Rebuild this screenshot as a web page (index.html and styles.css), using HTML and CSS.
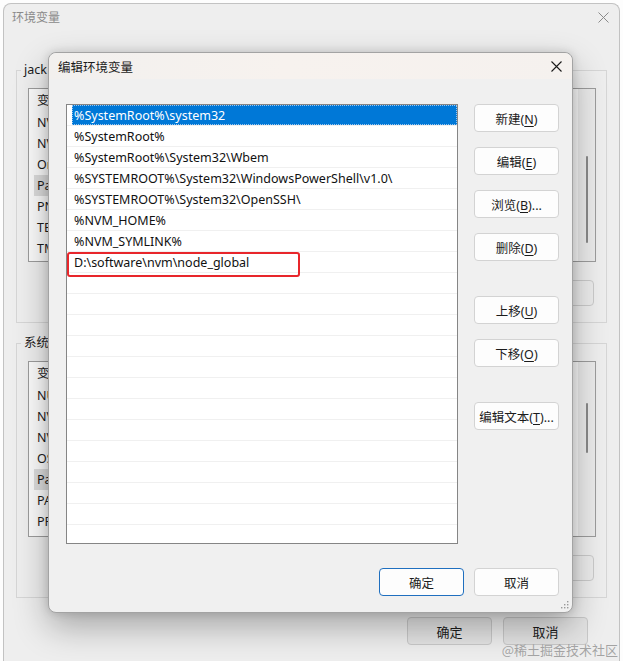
FILE: index.html
```html
<!DOCTYPE html>
<html lang="zh-CN">
<head>
<meta charset="utf-8">
<title>编辑环境变量</title>
<link rel="stylesheet" href="styles.css">
</head>
<body>
<div class="envwin">
  <div class="wtitle">
    <span>环境变量</span>
    <svg class="wclose" viewBox="0 0 11 11"><path d="M0.5 0.5L10.5 10.5M10.5 0.5L0.5 10.5" stroke="#8a8a8a" stroke-width="1" fill="none"/></svg>
  </div>
  <div class="wbody">
    <fieldset class="group">
      <legend>jack</legend>
      <div class="blist blist1">
        <div class="bcol">
          <div class="bhead">变</div>
          <div class="brow">NV</div>
          <div class="brow">NV</div>
          <div class="brow">On</div>
          <div class="brow sel">Pa</div>
          <div class="brow">PN</div>
          <div class="brow">TE</div>
          <div class="brow">TM</div>
        </div>
        <div class="bscroll"><div class="bthumb thumb1"></div></div>
      </div>
      <div class="bbtns">
        <button class="bbtn"></button>
        <button class="bbtn"></button>
        <button class="bbtn"></button>
      </div>
    </fieldset>
    <fieldset class="group group2">
      <legend>系统</legend>
      <div class="blist blist2">
        <div class="bcol">
          <div class="bhead">变</div>
          <div class="brow">NU</div>
          <div class="brow">NV</div>
          <div class="brow">NV</div>
          <div class="brow">OS</div>
          <div class="brow sel">Pa</div>
          <div class="brow">PA</div>
          <div class="brow">PR</div>
        </div>
        <div class="bscroll"><div class="bthumb thumb2"></div></div>
      </div>
      <div class="bbtns">
        <button class="bbtn"></button>
        <button class="bbtn"></button>
        <button class="bbtn"></button>
      </div>
    </fieldset>
    <div class="wfoot">
      <button class="wbtn">确定</button>
      <button class="wbtn">取消</button>
    </div>
  </div>
</div>

<div class="dialog">
  <div class="dtitle">
    <span>编辑环境变量</span>
    <svg class="dclose" viewBox="0 0 11 11"><path d="M0.5 0.5L10.5 10.5M10.5 0.5L0.5 10.5" stroke="#1a1a1a" stroke-width="1.1" fill="none"/></svg>
  </div>
  <div class="dbody">
    <div class="plist">
      <div class="prow sel"><span class="pcell">%SystemRoot%\system32</span></div>
      <div class="prow"><span class="pcell">%SystemRoot%</span></div>
      <div class="prow"><span class="pcell">%SystemRoot%\System32\Wbem</span></div>
      <div class="prow"><span class="pcell">%SYSTEMROOT%\System32\WindowsPowerShell\v1.0\</span></div>
      <div class="prow"><span class="pcell">%SYSTEMROOT%\System32\OpenSSH\</span></div>
      <div class="prow"><span class="pcell">%NVM_HOME%</span></div>
      <div class="prow"><span class="pcell">%NVM_SYMLINK%</span></div>
      <div class="prow"><span class="pcell">D:\software\nvm\node_global</span></div>
      <div class="prow"><span class="pcell"></span></div>
      <div class="prow"><span class="pcell"></span></div>
      <div class="prow"><span class="pcell"></span></div>
      <div class="prow"><span class="pcell"></span></div>
      <div class="prow"><span class="pcell"></span></div>
      <div class="prow"><span class="pcell"></span></div>
      <div class="prow"><span class="pcell"></span></div>
      <div class="prow"><span class="pcell"></span></div>
      <div class="prow"><span class="pcell"></span></div>
      <div class="prow"><span class="pcell"></span></div>
      <div class="prow"><span class="pcell"></span></div>
      <div class="prow"><span class="pcell"></span></div>
      <div class="prow"><span class="pcell"></span></div>
      <div class="mark"></div>
    </div>
    <div class="btncol">
      <button class="pbtn">新建(<u>N</u>)</button>
      <button class="pbtn">编辑(<u>E</u>)</button>
      <button class="pbtn">浏览(<u>B</u>)...</button>
      <button class="pbtn">删除(<u>D</u>)</button>
      <button class="pbtn spaced">上移(<u>U</u>)</button>
      <button class="pbtn">下移(<u>O</u>)</button>
      <button class="pbtn spaced">编辑文本(<u>T</u>)...</button>
    </div>
  </div>
  <div class="dfoot">
    <button class="pbtn ok">确定</button>
    <button class="pbtn">取消</button>
  </div>
  <svg class="grip" viewBox="0 0 9 9">
    <rect x="7" y="1" width="1.4" height="1.4" fill="#9a9a9a"/>
    <rect x="4" y="4" width="1.4" height="1.4" fill="#9a9a9a"/>
    <rect x="7" y="4" width="1.4" height="1.4" fill="#9a9a9a"/>
    <rect x="1" y="7" width="1.4" height="1.4" fill="#9a9a9a"/>
    <rect x="4" y="7" width="1.4" height="1.4" fill="#9a9a9a"/>
    <rect x="7" y="7" width="1.4" height="1.4" fill="#9a9a9a"/>
  </svg>
</div>

<div class="watermark">@稀土掘金技术社区</div>
</body>
</html>
```

FILE: styles.css
```css
* { box-sizing: border-box; }
html, body { margin: 0; padding: 0; }
body {
  width: 623px;
  height: 661px;
  overflow: hidden;
  position: relative;
  background: #fdfdfd;
  font-family: "Noto Sans", "Noto Sans CJK SC", sans-serif;
  font-size: 12.5px;
  color: #1b1b1b;
}
u { text-decoration: underline; text-underline-offset: 2px; }

/* background window */
.envwin {
  margin: 3px 0 0 3px;
  width: 617px;
  height: 658px;
  border: 1px solid #c2c2c2;
  border-bottom: 0;
  border-radius: 8px 8px 0 0;
  background: #eeeeee;
  overflow: hidden;
}
.wtitle {
  height: 26px;
  display: flex;
  align-items: center;
  justify-content: space-between;
  padding: 0 10px 0 8px;
  color: #8a8a8a;
  font-size: 12px;
}
.wclose { width: 11px; height: 11px; }
.wbody { padding: 32px 12px 0 12px; }

.group {
  margin: 0;
  padding: 0 10px 16px 4px;
  border: 1px solid #d6d6d6;
  min-width: 0;
}
.group legend {
  padding: 0 3px;
  line-height: 16px;
  color: #1b1b1b;
  font-size: 12.5px;
}
.group2 { margin-top: 12px; }

.blist {
  margin: 10px 0 0 7px;
  display: flex;
  background: #fbfbfb;
  border: 1px solid #9c9c9c;
  overflow: hidden;
}
.blist1 { height: 174px; }
.blist2 { height: 176px; }
.bcol { flex: 1; min-width: 0; }
.bhead { height: 23px; line-height: 23px; padding-left: 8px; white-space: nowrap; }
.brow { height: 21px; line-height: 21px; padding-left: 8px; white-space: nowrap; }
.brow.sel { background: #dcdcdc; margin: 0 40px 0 5px; padding-left: 3px; }
.bscroll { width: 17px; display: flex; justify-content: center; background: #ebebeb; }
.bthumb { width: 2px; background: #8a8a8a; border-radius: 1px; }
.thumb1 { margin-top: 67px; height: 87px; }
.thumb2 { margin-top: 41px; height: 50px; }

.bbtns {
  display: flex;
  justify-content: flex-end;
  gap: 10px;
  margin-top: 18px;
  padding-right: 2px;
}
.bbtn {
  width: 85px;
  height: 26px;
  border: 1px solid #cbcbcb;
  border-radius: 4px;
  background: #ececec;
  font: inherit;
  color: #1b1b1b;
  padding: 0;
}
.wfoot {
  display: flex;
  justify-content: flex-end;
  gap: 11px;
  margin-top: 19px;
  padding-right: 19px;
}
.wbtn {
  width: 85px;
  height: 28px;
  border: 1px solid #c9c9c9;
  border-radius: 4px;
  background: #e4e4e4;
  font: inherit;
  font-size: 13px;
  color: #1b1b1b;
  padding: 0;
}

/* modal dialog */
.dialog {
  position: absolute;
  left: 48px;
  top: 52px;
  width: 525px;
  height: 561px;
  border: 1px solid #a3a3a3;
  border-radius: 8px;
  background: #f0f0f0;
  box-shadow: 0 14px 34px rgba(0,0,0,0.30), 0 0 10px rgba(0,0,0,0.14);
  display: flex;
  flex-direction: column;
}
.dtitle {
  height: 26px;
  display: flex;
  align-items: center;
  justify-content: space-between;
  padding: 0 10px 0 9px;
  border-radius: 8px 8px 0 0;
  background: linear-gradient(90deg, #f2f0ee 0%, #f7f2ee 45%, #f5f1ee 100%);
  color: #1b1b1b;
}
.dclose { width: 11px; height: 11px; }
.dbody {
  display: flex;
  gap: 16px;
  padding: 25px 13px 0 17px;
}
.plist {
  position: relative;
  width: 392px;
  height: 440px;
  border: 1px solid #858585;
  background: #ffffff;
  overflow: hidden;
}
.prow {
  height: 21px;
  border-bottom: 1px solid #f0f0f0;
  display: flex;
}
.pcell {
  flex: 1;
  margin-left: 5px;
  padding-left: 2px;
  line-height: 21px;
  white-space: nowrap;
  color: #111;
}
.prow.sel .pcell {
  background: #0078d7;
  color: #ffffff;
  outline: 1px dotted #9cc6ee;
  outline-offset: -1px;
}
.mark {
  position: absolute;
  left: 0;
  top: 147px;
  width: 233px;
  height: 25px;
  border: 2px solid #e8262b;
  border-radius: 3px;
}
.btncol {
  display: flex;
  flex-direction: column;
  gap: 15px;
  width: 85px;
}
.pbtn {
  width: 85px;
  height: 28px;
  border: 1px solid #d3d3d3;
  border-radius: 4px;
  background: #fdfdfd;
  font: inherit;
  color: #1b1b1b;
  padding: 0;
}
.spaced { margin-top: 20px; }
.dfoot {
  display: flex;
  justify-content: flex-end;
  gap: 10px;
  padding: 24px 13px 0 17px;
}
.pbtn.ok { border-color: #1f6fbf; }
.grip {
  position: absolute;
  right: 3px;
  bottom: 3px;
  width: 9px;
  height: 9px;
}

.watermark {
  position: absolute;
  right: 5px;
  bottom: 2px;
  font-size: 13px;
  color: rgba(150,150,150,0.85);
  font-family: "Noto Sans CJK SC", sans-serif;
}
```
